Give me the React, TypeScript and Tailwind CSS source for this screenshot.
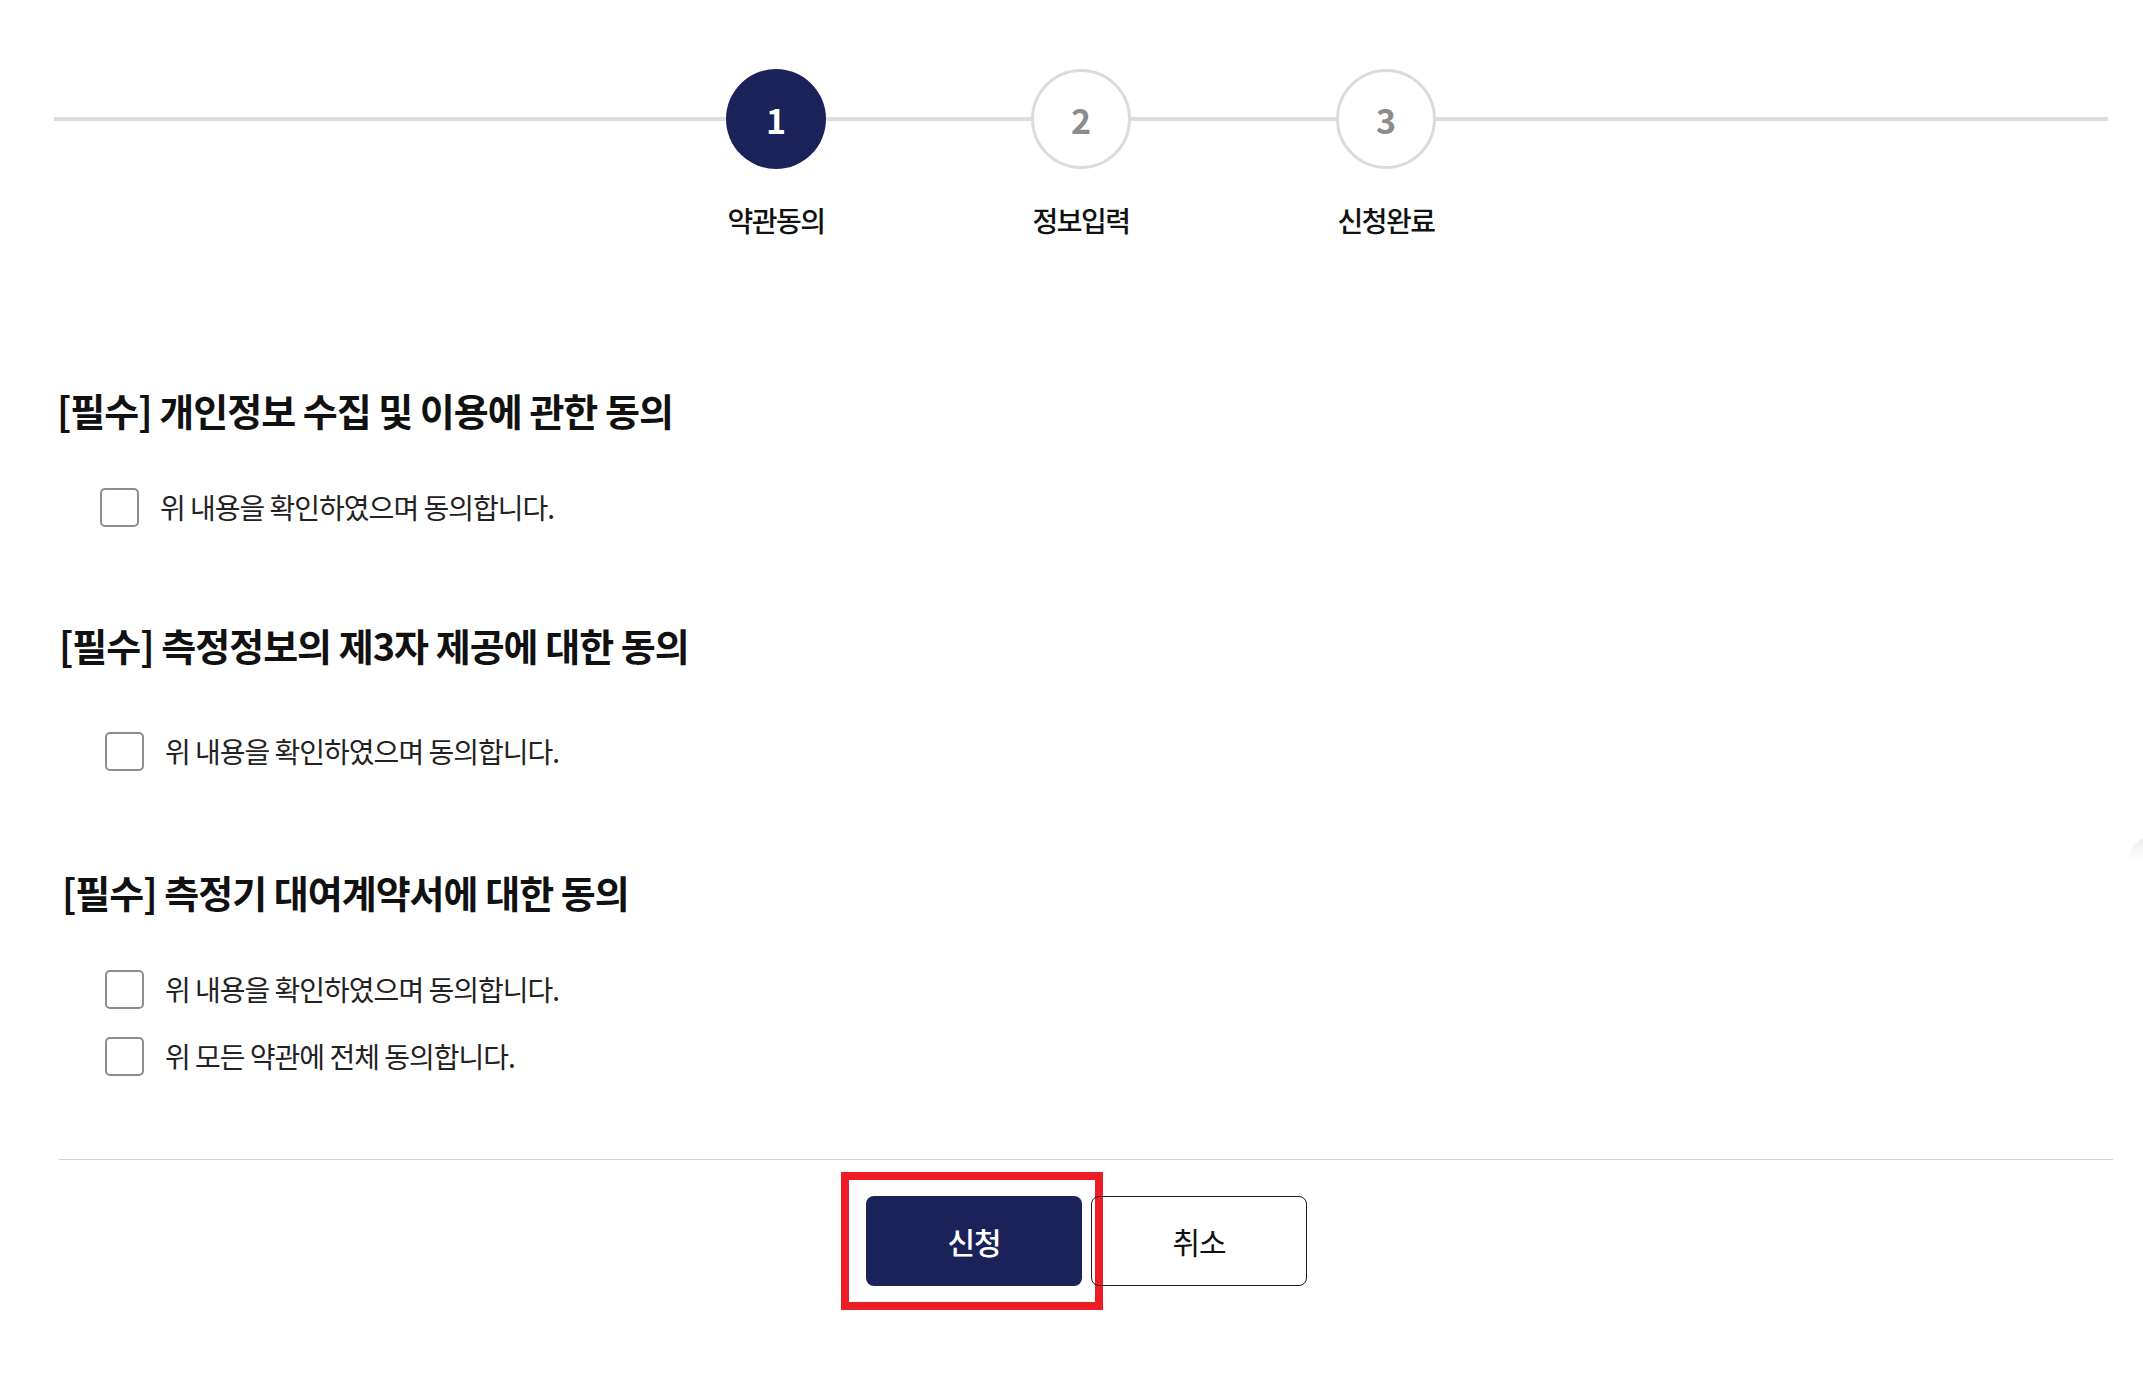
import React from "react";

const FONT = { fontFamily: '"Noto Sans CJK KR", "Noto Sans", sans-serif' };

const STEPS = [
  { no: 1, label: "약관동의" },
  { no: 2, label: "정보입력" },
  { no: 3, label: "신청완료" },
];

function Stepper({ current }: { current: number }) {
  return (
    <div className="flex items-start">
      <div className="flex-1 h-[4px] mt-[48px] bg-[#dcdde0]" />
      {STEPS.map((step, i) => (
        <React.Fragment key={step.no}>
          {i > 0 && <div className="w-[205px] h-[4px] mt-[48px] bg-[#dcdde0]" />}
          <div className="flex flex-col items-center w-[100px]">
            {step.no === current ? (
              <div className="w-[100px] h-[100px] rounded-full bg-[#1b2259] flex items-center justify-center text-white text-[34px] font-semibold">
                {step.no}
              </div>
            ) : (
              <div className="w-[100px] h-[100px] rounded-full border-[3px] border-[#d9dbde] bg-white flex items-center justify-center text-[#8c8c8c] text-[34px] font-semibold">
                {step.no}
              </div>
            )}
            <p className="mt-[31px] text-[28px] leading-[40px] font-medium text-[#111] whitespace-nowrap tracking-[-1.5px]">
              {step.label}
            </p>
          </div>
        </React.Fragment>
      ))}
      <div className="flex-1 h-[4px] mt-[48px] bg-[#dcdde0]" />
    </div>
  );
}

function AgreeRow({ text }: { text: string }) {
  return (
    <label className="flex items-center gap-[21px] cursor-pointer">
      <span className="w-[39px] h-[39px] rounded-[5px] border-2 border-[#8d8d8d] bg-white shrink-0" />
      <span className="text-[28px] leading-[40px] text-[#222] tracking-[-1px]">{text}</span>
    </label>
  );
}

export default function App() {
  return (
    <div className="relative min-h-screen w-full bg-white overflow-hidden" style={FONT}>
      <div className="ml-[54px] mr-[35px] pt-[69px]">
        <Stepper current={1} />
      </div>

      <section className="ml-[57px] mt-[148px]">
        <h2 className="text-[38px] leading-[44px] font-bold text-[#111] tracking-[-1px]">
          [필수] 개인정보 수집 및 이용에 관한 동의
        </h2>
        <div className="ml-[43px] mt-[55px]">
          <AgreeRow text="위 내용을 확인하였으며 동의합니다." />
        </div>
      </section>

      <section className="ml-[59px] mt-[96px]">
        <h2 className="text-[38px] leading-[44px] font-bold text-[#111] tracking-[-1px]">
          [필수] 측정정보의 제3자 제공에 대한 동의
        </h2>
        <div className="ml-[46px] mt-[64px]">
          <AgreeRow text="위 내용을 확인하였으며 동의합니다." />
        </div>
      </section>

      <section className="ml-[62px] mt-[99px]">
        <h2 className="text-[38px] leading-[44px] font-bold text-[#111] tracking-[-1px]">
          [필수] 측정기 대여계약서에 대한 동의
        </h2>
        <div className="ml-[43px] mt-[55px] flex flex-col gap-[27px]">
          <AgreeRow text="위 내용을 확인하였으며 동의합니다." />
          <AgreeRow text="위 모든 약관에 전체 동의합니다." />
        </div>
      </section>

      <div className="ml-[59px] mr-[30px] mt-[83px] h-px bg-[#d2d2da]" />

      <div className="ml-[5px] mt-[12px] flex justify-center">
        <div className="flex items-center">
          <div className="border-[8px] border-[#ee1c25] pl-[17px] pr-[13px] py-[16px] -mr-[12px]">
            <button className="block w-[216px] h-[90px] rounded-[8px] bg-[#1b2259] text-white text-[30px] font-medium tracking-[-1px]">
              신청
            </button>
          </div>
          <button className="relative w-[216px] h-[90px] rounded-[8px] border border-[#1a1a1a] bg-transparent text-[#111] text-[30px] tracking-[-1px]">
            취소
          </button>
        </div>
      </div>

      <div className="absolute left-[2128px] top-[837px] w-[60px] h-[24px] rounded-tl-[40px] bg-gradient-to-b from-[#ececec] to-white" />
    </div>
  );
}
